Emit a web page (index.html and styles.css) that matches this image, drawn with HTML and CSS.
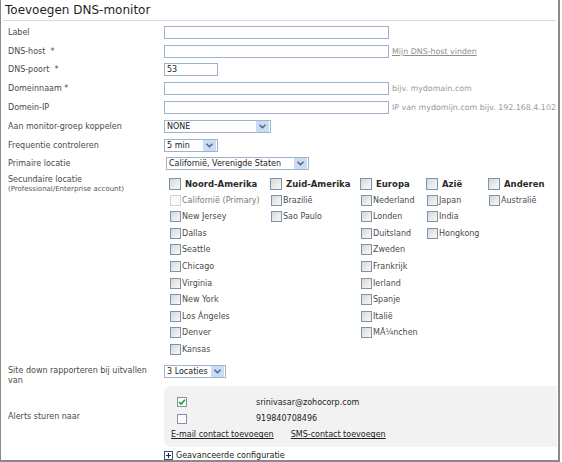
FILE: index.html
```html
<!DOCTYPE html>
<html lang="nl">
  <head>
    <meta charset="UTF-8" />
    <title>Toevoegen DNS-monitor</title>
    <link rel="stylesheet" href="styles.css">
  </head>
  <body>
    <div class="panel">
      <h1 class="title">Toevoegen DNS-monitor</h1>

      <div class="form">
        <div class="row">
          <label class="lbl">Label</label>
          <div class="field"><input class="txt wide" type="text" /></div>
        </div>
        <div class="row">
          <label class="lbl">DNS-host &nbsp;*</label>
          <div class="field">
            <input class="txt wide" type="text" />
            <a class="hint hint-link" href="#">Mijn DNS-host vinden</a>
          </div>
        </div>
        <div class="row">
          <label class="lbl">DNS-poort &nbsp;*</label>
          <div class="field"><input class="txt short" type="text" value="53" /></div>
        </div>
        <div class="row">
          <label class="lbl">Domeinnaam *</label>
          <div class="field">
            <input class="txt wide" type="text" />
            <span class="hint">bijv. mydomain.com</span>
          </div>
        </div>
        <div class="row">
          <label class="lbl">Domein-IP</label>
          <div class="field">
            <input class="txt wide" type="text" />
            <span class="hint">IP van mydomijn.com bijv. 192.168.4.102</span>
          </div>
        </div>
        <div class="row">
          <label class="lbl">Aan monitor-groep koppelen</label>
          <div class="field">
            <div class="select sel-group"><span class="sel-text">NONE</span><span class="sel-arrow"><svg width="7" height="5" viewBox="0 0 7 5"><path d="M0.5 0.8 L3.5 3.8 L6.5 0.8" fill="none" stroke="#4d6185" stroke-width="1.4"/></svg></span></div>
          </div>
        </div>
        <div class="row">
          <label class="lbl">Frequentie controleren</label>
          <div class="field">
            <div class="select sel-freq"><span class="sel-text">5 min</span><span class="sel-arrow"><svg width="7" height="5" viewBox="0 0 7 5"><path d="M0.5 0.8 L3.5 3.8 L6.5 0.8" fill="none" stroke="#4d6185" stroke-width="1.4"/></svg></span></div>
          </div>
        </div>
        <div class="row">
          <label class="lbl">Primaire locatie</label>
          <div class="field">
            <div class="select sel-loc"><span class="sel-text">Californië, Verenigde Staten</span><span class="sel-arrow"><svg width="7" height="5" viewBox="0 0 7 5"><path d="M0.5 0.8 L3.5 3.8 L6.5 0.8" fill="none" stroke="#4d6185" stroke-width="1.4"/></svg></span></div>
          </div>
        </div>

        <div class="row row-top">
          <label class="lbl lbl-sec">Secundaire locatie<small>(Professional/Enterprise account)</small></label>
          <div class="regions">
            <div class="region r-na">
              <div class="reg-head"><span class="cb"></span>Noord-Amerika</div>
              <div class="loc disabled"><span class="cb"></span>Californië (Primary)</div>
              <div class="loc"><span class="cb"></span>New Jersey</div>
              <div class="loc"><span class="cb"></span>Dallas</div>
              <div class="loc"><span class="cb"></span>Seattle</div>
              <div class="loc"><span class="cb"></span>Chicago</div>
              <div class="loc"><span class="cb"></span>Virginia</div>
              <div class="loc"><span class="cb"></span>New York</div>
              <div class="loc"><span class="cb"></span>Los Ángeles</div>
              <div class="loc"><span class="cb"></span>Denver</div>
              <div class="loc"><span class="cb"></span>Kansas</div>
            </div>
            <div class="region r-sa">
              <div class="reg-head"><span class="cb"></span>Zuid-Amerika</div>
              <div class="loc"><span class="cb"></span>Brazilië</div>
              <div class="loc"><span class="cb"></span>Sao Paulo</div>
            </div>
            <div class="region r-eu">
              <div class="reg-head"><span class="cb"></span>Europa</div>
              <div class="loc"><span class="cb"></span>Nederland</div>
              <div class="loc"><span class="cb"></span>Londen</div>
              <div class="loc"><span class="cb"></span>Duitsland</div>
              <div class="loc"><span class="cb"></span>Zweden</div>
              <div class="loc"><span class="cb"></span>Frankrijk</div>
              <div class="loc"><span class="cb"></span>Ierland</div>
              <div class="loc"><span class="cb"></span>Spanje</div>
              <div class="loc"><span class="cb"></span>Italië</div>
              <div class="loc"><span class="cb"></span>MÃ&frac14;nchen</div>
            </div>
            <div class="region r-as">
              <div class="reg-head"><span class="cb"></span>Azië</div>
              <div class="loc"><span class="cb"></span>Japan</div>
              <div class="loc"><span class="cb"></span>India</div>
              <div class="loc"><span class="cb"></span>Hongkong</div>
            </div>
            <div class="region r-ot">
              <div class="reg-head"><span class="cb"></span>Anderen</div>
              <div class="loc"><span class="cb"></span>Australië</div>
            </div>
          </div>
        </div>

        <div class="row row-down">
          <label class="lbl">Site down rapporteren bij uitvallen<br />van</label>
          <div class="field">
            <div class="select sel-down"><span class="sel-text">3 Locaties</span><span class="sel-arrow"><svg width="7" height="5" viewBox="0 0 7 5"><path d="M0.5 0.8 L3.5 3.8 L6.5 0.8" fill="none" stroke="#4d6185" stroke-width="1.4"/></svg></span></div>
          </div>
        </div>

        <div class="row row-alerts">
          <label class="lbl">Alerts sturen naar</label>
          <div class="alert-box">
            <div class="contact">
              <span class="cb cb-checked"><svg width="9" height="8" viewBox="0 0 9 8"><path d="M1.2 4 L3.5 6.3 L7.8 1.4" fill="none" stroke="#21a121" stroke-width="1.8"/></svg></span>
              <span class="contact-val">srinivasar@zohocorp.com</span>
            </div>
            <div class="contact">
              <span class="cb cb-plain"></span>
              <span class="contact-val">919840708496</span>
            </div>
            <div class="add-links">
              <a href="#">E-mail contact toevoegen</a>
              <a href="#">SMS-contact toevoegen</a>
            </div>
          </div>
        </div>

        <div class="row row-adv">
          <span class="lbl"></span>
          <div class="field">
            <span class="plus"><svg width="9" height="9" viewBox="0 0 9 9"><rect x="0.5" y="0.5" width="8" height="8" fill="#fff" stroke="#3c4f6e"/><path d="M2 4.5 H7 M4.5 2 V7" stroke="#1a2a4a" stroke-width="1.2"/></svg></span>
            <span class="adv-text">Geavanceerde configuratie</span>
          </div>
        </div>
      </div>
    </div>
  </body>
</html>
```

FILE: styles.css
```css
* {
  margin: 0;
  padding: 0;
  box-sizing: border-box;
}

body {
  background: #ffffff;
  color: #4a4a4a;
  font-family: "DejaVu Sans", Verdana, sans-serif;
  font-size: 8px;
}

.panel {
  width: 560px;
  height: 462px;
  border: solid #8a8a8a;
  border-width: 0 2px 2px 1px;
}

.title {
  height: 21px;
  margin: 0 2px;
  padding: 3px 2px 0 2px;
  border-bottom: 1px solid #d9d9d9;
  font-size: 12px;
  font-weight: normal;
  color: #1f1f1f;
  line-height: 14px;
}

.form {
  padding: 2px 0 0 7px;
}

.row {
  display: flex;
  align-items: center;
  height: 18.8px;
}

.lbl {
  width: 156px;
  flex-shrink: 0;
  color: #4a4a4a;
  white-space: nowrap;
}

.field {
  display: flex;
  align-items: center;
}

.txt {
  height: 13px;
  border: 1px solid #9fb3cc;
  font-family: inherit;
  font-size: 8px;
  padding: 0 2px;
  color: #222;
}

.txt.wide {
  width: 225px;
}

.txt.short {
  width: 54px;
}

.hint {
  margin-left: 3px;
  color: #9a9a9a;
  font-size: 7.9px;
  white-space: nowrap;
}

.hint-link {
  color: #8e8e8e;
  text-decoration: underline;
}

.select {
  display: inline-flex;
  align-items: center;
  justify-content: space-between;
  gap: 3px;
  height: 13px;
  border: 1px solid #9fb3cc;
  padding-left: 2px;
  color: #222;
  background: #fff;
  white-space: nowrap;
}

.sel-arrow {
  width: 13px;
  height: 11px;
  margin-right: 1px;
  display: flex;
  align-items: center;
  justify-content: center;
  background: #c9dcf6;
  border-radius: 1px;
  flex-shrink: 0;
}

.sel-group {
  width: 107px;
}

.sel-freq {
  width: 54px;
}

.sel-loc {
  width: 143px;
  margin-left: 2px;
  height: 13px;
}

.sel-down {
  width: auto;
}

.row-top {
  align-items: flex-start;
  height: auto;
  margin-top: 2px;
}

.lbl-sec {
  line-height: 10px;
}

.lbl-sec small {
  display: block;
  font-size: 7px;
  line-height: 8px;
  color: #555;
}

.regions {
  display: grid;
  grid-template-columns: 101px 90px 66px 62px 70px;
  padding-left: 5px;
}

.region {
  display: flex;
  flex-direction: column;
}

.reg-head {
  display: flex;
  align-items: center;
  height: 16.5px;
  font-weight: bold;
  font-size: 8.5px;
  color: #2a2a2a;
}

.reg-head .cb {
  width: 12px;
  height: 12px;
  margin-right: 4px;
}

.loc {
  display: flex;
  align-items: center;
  height: 16.6px;
  padding-left: 1px;
  color: #4a4a4a;
  font-size: 8px;
  white-space: nowrap;
}

.cb {
  display: inline-flex;
  align-items: center;
  justify-content: center;
  width: 11px;
  height: 11px;
  margin-right: 1px;
  border: 1px solid #7c93b2;
  background: linear-gradient(135deg, #d6d6d2 0%, #ecece8 60%, #f7f7f5 100%);
  flex-shrink: 0;
}

.disabled {
  color: #7a7a7a;
}

.disabled .cb {
  border-color: #d2d2d2;
  background: #fafafa;
}

.row-down {
  height: 28px;
  align-items: flex-start;
  padding-top: 7px;
}

.row-down .lbl {
  line-height: 10px;
  margin-top: 1px;
}

.row-alerts {
  height: 61px;
}

.alert-box {
  align-self: stretch;
  flex: 1;
  margin-right: 1px;
  padding: 8px 0 0 7px;
  background: #f1f2f1;
  border-radius: 7px 0 0 7px;
}

.contact {
  display: flex;
  align-items: center;
  height: 16.5px;
  padding-left: 6px;
}

.contact .cb {
  width: 10px;
  height: 10px;
  background: #fbfbfb;
  border-color: #8293ab;
}

.contact-val {
  margin-left: 68px;
  color: #222;
}

.add-links {
  display: flex;
  gap: 17px;
  height: 16px;
  align-items: center;
}

.add-links a {
  color: #222;
  text-decoration: underline;
}

.row-adv {
  height: 18px;
}

.plus {
  display: inline-flex;
  width: 9px;
  height: 9px;
  margin-right: 3px;
}

.adv-text {
  color: #222;
}
```
